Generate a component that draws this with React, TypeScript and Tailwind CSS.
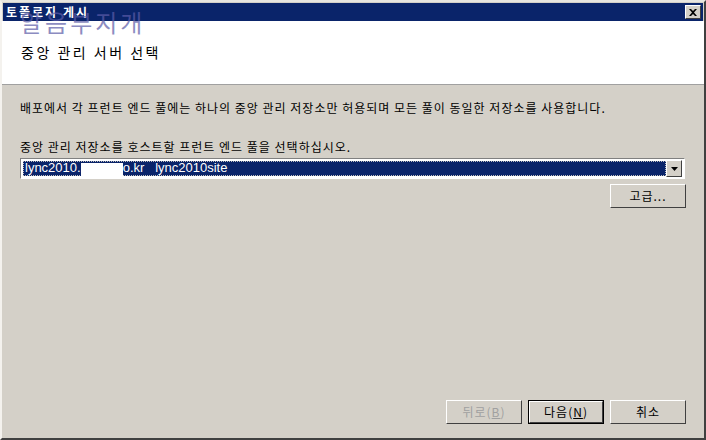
const font = { fontFamily: '"Noto Sans CJK KR", "DejaVu Sans", sans-serif' };

function Btn({ label, disabled, primary }: { label: React.ReactNode; disabled?: boolean; primary?: boolean }) {
  return (
    <div className={primary ? "border border-black" : ""}>
      <div className={`${primary ? "w-[74px] h-[22px]" : "w-[76px] h-[24px]"} border border-t-white border-l-white border-r-[#404040] border-b-[#404040] bg-[#d4d0c8] flex items-center justify-center`}>
        <span className={`text-[12px] tracking-[1px] ${disabled ? "text-[#a0a0a0]" : "text-black"}`}>{label}</span>
      </div>
    </div>
  );
}

export default function App() {
  return (
    <div className="relative w-[706px] h-[440px] bg-[#d4d0c8] overflow-hidden" style={font}>
      <div className="w-full h-full flex flex-col border-2 border-t-[#e8e6e0] border-l-[#f4f2ee] border-r-[#404040] border-b-[#404040]">
        {/* title bar */}
        <div className="h-[18px] mx-[1px] mt-[1px] bg-[#0a246a] flex items-center justify-between pl-[3px] pr-[2px]">
          <span className="text-white text-[12px] font-bold tracking-[2px] leading-none">토폴로지 게시</span>
          <div className="w-[16px] h-[14px] bg-[#d4d0c8] border border-t-white border-l-white border-r-[#404040] border-b-[#404040] flex items-center justify-center">
            <svg width="8" height="7" viewBox="0 0 8 7">
              <path d="M0 0 L2 0 L4 2 L6 0 L8 0 L5 3.5 L8 7 L6 7 L4 5 L2 7 L0 7 L3 3.5 Z" fill="black" />
            </svg>
          </div>
        </div>

        {/* header */}
        <div className="h-[64px] bg-white border-b border-[#a0a0a0] flex items-center pl-[19px]">
          <span className="text-[14px] tracking-[2.5px] text-black">중앙 관리 서버 선택</span>
        </div>

        {/* body */}
        <div className="flex-1 flex flex-col pl-[18px] pr-[18px] pt-[15px]">
          <p className="text-[12px] tracking-[1px] text-black leading-[16px]">
            배포에서 각 프런트 엔드 풀에는 하나의 중앙 관리 저장소만 허용되며 모든 풀이 동일한 저장소를 사용합니다.
          </p>
          <p className="text-[12px] tracking-[1px] text-black leading-[16px] mt-[23px]">
            중앙 관리 저장소를 호스트할 프런트 엔드 풀을 선택하십시오.
          </p>
          <div className="mt-[3px] mr-[1px] h-[21px] border border-t-[#808080] border-l-[#808080] border-r-white border-b-white bg-white flex items-center p-[2px]">
            <div className="flex-1 h-[15px] bg-[#0a246a] border border-dotted border-[#c0c0c0] flex items-center pl-[1px]">
              <span className="text-white text-[13px] leading-none" style={{ fontFamily: '"Liberation Sans", Arial, sans-serif' }}>
                lync2010.<span className="inline-block w-[42px] h-[13px] bg-white align-middle" />o.kr&nbsp;&nbsp;&nbsp;lync2010site
              </span>
            </div>
            <div className="w-[16px] h-[17px] bg-[#d4d0c8] border border-t-white border-l-white border-r-[#404040] border-b-[#404040] flex items-center justify-center">
              <svg width="7" height="4" viewBox="0 0 7 4">
                <path d="M0 0 L7 0 L3.5 4 Z" fill="black" />
              </svg>
            </div>
          </div>
          <div className="flex justify-end mt-[5px]">
            <Btn label="고급..." />
          </div>
          <div className="flex-1" />
          <div className="flex justify-end gap-[6px] mb-[14px] items-center">
            <Btn label={<>뒤로(<u>B</u>)</>} disabled />
            <Btn label={<>다음(<u>N</u>)</>} primary />
            <Btn label="취소" />
          </div>
        </div>
      </div>

      {/* watermark */}
      <div className="absolute left-[20px] top-[4px] text-[24px] tracking-[3px] text-[#5c5ca8] opacity-70 pointer-events-none">
        알음부지개
      </div>
    </div>
  );
}
